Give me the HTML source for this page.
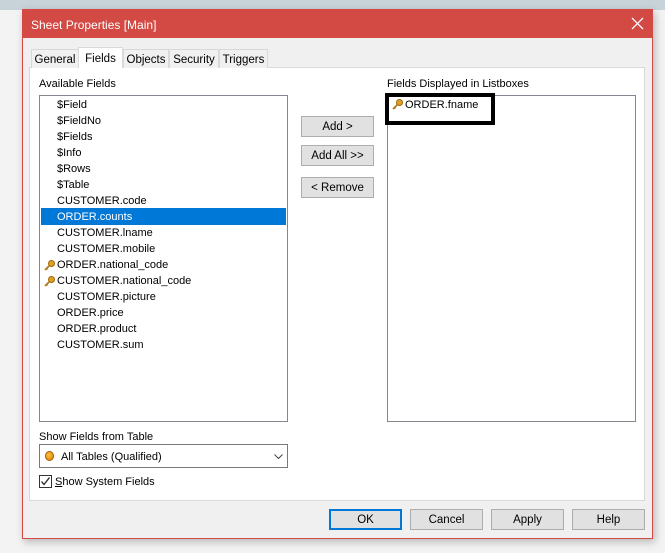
<!DOCTYPE html>
<html><head><style>
*{box-sizing:border-box;margin:0;padding:0}
body{width:665px;height:553px;background:#f3f3f3;position:relative;overflow:hidden;font-family:"Liberation Sans",Arial,sans-serif;font-size:11px;color:#000}
.a{position:absolute}
.top{left:0;top:0;width:665px;height:10px;background:#c8d2d9}
.win{left:22px;top:9px;width:631px;height:530px;background:#f0f0f0;border:1px solid #d24a43;box-shadow:2px 3px 8px rgba(0,0,0,.25)}
.title{left:22px;top:9px;width:631px;height:29px;background:#d24a43;color:#fff;font-size:12px;padding:9px 0 0 9px}
.panel{left:29px;top:67px;width:616px;height:434px;background:#fff;border:1px solid #d9d9d9}
.tab{top:49px;height:19px;border:1px solid #d9d9d9;border-bottom:none;background:#f0f0f0;padding:4px 0 0 0;text-align:center;font-size:11.5px}
.list{background:#fff;border:1px solid #828790}
.item{position:absolute;left:17px;font-size:11px}
.btn{background:#e1e1e1;border:1px solid #adadad;text-align:center;font-size:11.5px;line-height:20px}
.key{position:absolute;width:11px;height:11px}
</style></head><body>
<div class="a top"></div>
<div class="a win"></div>
<div class="a title">Sheet Properties [Main]</div>
<svg class="a" style="left:631px;top:17px" width="13" height="13"><path d="M1 1L12 12M12 1L1 12" stroke="#fff" stroke-width="1.3"/></svg>
<div class="a panel"></div>
<div class="a tab" style="left:31px;width:48px">General</div>
<div class="a tab" style="left:123px;width:46px">Objects</div>
<div class="a tab" style="left:169px;width:50px">Security</div>
<div class="a tab" style="left:219px;width:49px">Triggers</div>
<div class="a tab" style="left:78px;top:47px;width:45px;height:21px;background:#fff;padding-top:5px">Fields</div>
<div class="a" style="left:39px;top:78px">Available Fields</div>
<div class="a" style="left:387px;top:78px">Fields Displayed in Listboxes</div>
<div class="a list" style="left:39px;top:95px;width:249px;height:327px">
<div class="a" style="left:1px;top:112px;width:245px;height:17px;background:#0078d7"></div>
<div class="item" style="top:3px">$Field</div>
<div class="item" style="top:19px">$FieldNo</div>
<div class="item" style="top:35px">$Fields</div>
<div class="item" style="top:51px">$Info</div>
<div class="item" style="top:67px">$Rows</div>
<div class="item" style="top:83px">$Table</div>
<div class="item" style="top:99px">CUSTOMER.code</div>
<div class="item" style="top:115px;color:#fff">ORDER.counts</div>
<div class="item" style="top:131px">CUSTOMER.lname</div>
<div class="item" style="top:147px">CUSTOMER.mobile</div>
<svg class="key" style="left:4px;top:164px" viewBox="0 0 11 11"><circle cx="7.5" cy="3.5" r="3" fill="#e0a020" stroke="#a06810"/><path d="M5.5 5.5L1 10M2.5 8.5l1 1" stroke="#b07818" stroke-width="1.6"/></svg>
<div class="item" style="top:163px">ORDER.national_code</div>
<svg class="key" style="left:4px;top:180px" viewBox="0 0 11 11"><circle cx="7.5" cy="3.5" r="3" fill="#e0a020" stroke="#a06810"/><path d="M5.5 5.5L1 10M2.5 8.5l1 1" stroke="#b07818" stroke-width="1.6"/></svg>
<div class="item" style="top:179px">CUSTOMER.national_code</div>
<div class="item" style="top:195px">CUSTOMER.picture</div>
<div class="item" style="top:211px">ORDER.price</div>
<div class="item" style="top:227px">ORDER.product</div>
<div class="item" style="top:243px">CUSTOMER.sum</div>
</div>
<div class="a list" style="left:387px;top:95px;width:249px;height:327px"></div>
<div class="a" style="left:385px;top:93px;width:110px;height:32px;border:4px solid #000"></div>
<svg class="key" style="left:392px;top:99px" viewBox="0 0 11 11"><circle cx="7.5" cy="3.5" r="3" fill="#e0a020" stroke="#a06810"/><path d="M5.5 5.5L1 10M2.5 8.5l1 1" stroke="#b07818" stroke-width="1.6"/></svg>
<div class="a" style="left:405px;top:99px">ORDER.fname</div>
<div class="a btn" style="left:301px;top:116px;width:73px;height:21px">Add &gt;</div>
<div class="a btn" style="left:301px;top:145px;width:73px;height:21px">Add All &gt;&gt;</div>
<div class="a btn" style="left:301px;top:177px;width:73px;height:21px">&lt; Remove</div>
<div class="a" style="left:39px;top:431px">Show Fields from Table</div>
<div class="a" style="left:39px;top:444px;width:249px;height:24px;background:#fff;border:1px solid #7a7a7a"></div>
<div class="a" style="left:45px;top:451px;width:9px;height:10px;border-radius:50%;background:radial-gradient(circle at 40% 35%,#ffc040,#e08000);border:1px solid #a05800"></div>
<div class="a" style="left:61px;top:451px">All Tables (Qualified)</div>
<svg class="a" style="left:274px;top:454px" width="9" height="6"><path d="M0.5 0.5L4.5 4.5L8.5 0.5" stroke="#444" fill="none"/></svg>
<div class="a" style="left:39px;top:475px;width:13px;height:13px;border:1px solid #333;background:#fff"></div>
<svg class="a" style="left:40px;top:476px" width="11" height="11"><path d="M1.5 5.5L4 8.5L9.5 1.5" stroke="#222" stroke-width="1.3" fill="none"/></svg>
<div class="a" style="left:55px;top:476px"><u>S</u>how System Fields</div>
<div class="a btn" style="left:329px;top:509px;width:73px;height:21px;border:2px solid #0078d7;line-height:18px">OK</div>
<div class="a btn" style="left:410px;top:509px;width:73px;height:21px">Cancel</div>
<div class="a btn" style="left:491px;top:509px;width:73px;height:21px">Apply</div>
<div class="a btn" style="left:572px;top:509px;width:73px;height:21px">Help</div>
</body></html>
